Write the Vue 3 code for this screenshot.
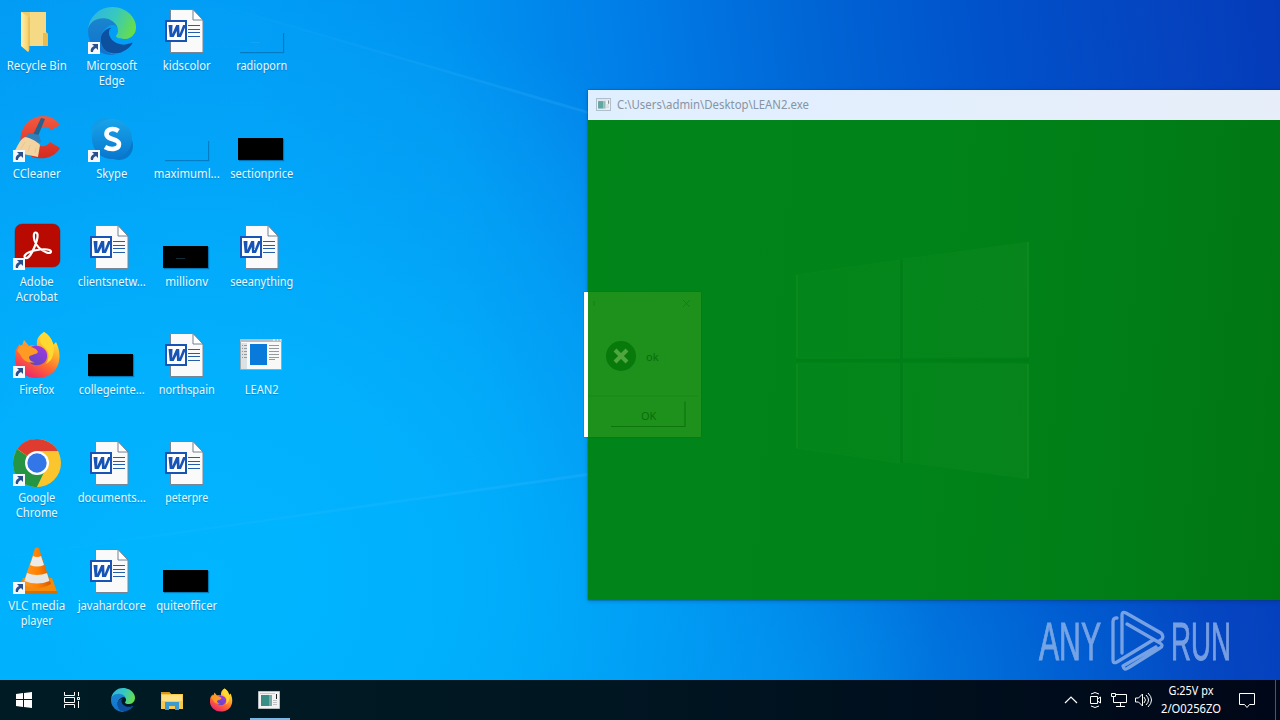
<script setup>
const columns = [
  [
    { icon: 'bin', shortcut: false, lines: [['Recycle Bin', 60]] },
    { icon: 'ccleaner', shortcut: true, lines: [['CCleaner', 48]] },
    { icon: 'acrobat', shortcut: true, lines: [['Adobe', 34], ['Acrobat', 42]] },
    { icon: 'firefox', shortcut: true, lines: [['Firefox', 35]] },
    { icon: 'chrome', shortcut: true, lines: [['Google', 37], ['Chrome', 42]] },
    { icon: 'vlc', shortcut: true, lines: [['VLC media', 57], ['player', 32]] }
  ],
  [
    { icon: 'edge', shortcut: true, lines: [['Microsoft', 51], ['Edge', 26]] },
    { icon: 'skype', shortcut: true, lines: [['Skype', 31]] },
    { icon: 'word', lines: [['clientsnetw...', 68]] },
    { icon: 'black', lines: [['collegeinte...', 66]] },
    { icon: 'word', lines: [['documents...', 68]] },
    { icon: 'word', lines: [['javahardcore', 68]] }
  ],
  [
    { icon: 'word', lines: [['kidscolor', 48]] },
    { icon: 'ghost', lines: [['maximuml...', 66]] },
    { icon: 'black', mark: true, lines: [['millionv', 43]] },
    { icon: 'word', lines: [['northspain', 56]] },
    { icon: 'word', lines: [['peterpre', 43]] },
    { icon: 'black', lines: [['quiteofficer', 61]] }
  ],
  [
    { icon: 'ghost', mark: true, lines: [['radioporn', 51]] },
    { icon: 'black', lines: [['sectionprice', 63]] },
    { icon: 'word', lines: [['seeanything', 63]] },
    { icon: 'app', lines: [['LEAN2', 34]] }
  ]
]
</script>

<template>
  <div class="screen">
    <svg class="defs" width="0" height="0" aria-hidden="true">
      <defs>
        <linearGradient id="edgeGreen" x1="0" y1=".3" x2="1" y2=".6">
          <stop offset="0" stop-color="#2fb4e4" /><stop offset=".5" stop-color="#36c8c0" /><stop offset="1" stop-color="#68de48" />
        </linearGradient>
        <linearGradient id="edgeBlue" x1=".5" y1="0" x2=".5" y2="1">
          <stop offset="0" stop-color="#1a86cf" /><stop offset="1" stop-color="#1172cc" />
        </linearGradient>
        <linearGradient id="ffBody" x1=".8" y1="0" x2=".25" y2="1">
          <stop offset="0" stop-color="#fff045" /><stop offset=".32" stop-color="#ffb52a" /><stop offset=".62" stop-color="#ff6a31" /><stop offset="1" stop-color="#ed1e72" />
        </linearGradient>
        <linearGradient id="ffCore" x1=".8" y1="0" x2=".2" y2="1">
          <stop offset="0" stop-color="#a338df" /><stop offset="1" stop-color="#5c48c2" />
        </linearGradient>
        <linearGradient id="skypeBg" x1="0" y1="0" x2="0" y2="1">
          <stop offset="0" stop-color="#18a4ea" /><stop offset="1" stop-color="#0877cf" />
        </linearGradient>
        <linearGradient id="ccRed" x1="0" y1="0" x2="0" y2="1">
          <stop offset="0" stop-color="#f45a40" /><stop offset="1" stop-color="#d52a20" />
        </linearGradient>
        <linearGradient id="folder" x1="0" y1="0" x2="1" y2="0">
          <stop offset="0" stop-color="#fff0b0" /><stop offset="1" stop-color="#f4ce62" />
        </linearGradient>
        <linearGradient id="cone" x1="0" y1="0" x2="1" y2="0">
          <stop offset="0" stop-color="#ff9a25" /><stop offset=".55" stop-color="#ff8000" /><stop offset="1" stop-color="#d75a00" />
        </linearGradient>

        <symbol id="i-bin" viewBox="0 0 48 48">
          <path d="M8 5h25v20l2 2v12H15z" fill="#f1cb67" />
          <path d="M17 5h16v34H17z" fill="#f6d984" />
          <path d="M30 26h3l2 1v12h-5z" fill="#e9bc4d" />
          <path d="M8 5l8 5v34l-1 1-7-6z" fill="url(#folder)" />
          <path d="M16 10v33" stroke="#dfb34b" stroke-width=".8" />
        </symbol>
        <symbol id="i-edge" viewBox="0 0 256 256">
          <path d="M231 190.500c-3.200 1.700-6.600 3.200-10.100 4.400a87.400 87.400 0 0 1-31.600 5.900c-41.700 0-78-28.700-78-65.500a27.500 27.500 0 0 1 14.400-24.100c-37.700 1.600-60 40.900-60 63.900 0 55 45 76 85.500 71.700 7 0 17.500-2 23.800-4l1.200-.4a128 128 0 0 0 60-46 4 4 0 0 0-5.200-5.900z" fill="#0c509f" />
          <path d="M105.700 241.400A79.200 79.200 0 0 1 83 220.100 80.700 80.700 0 0 1 115 100c3.100-1.500 8.500-4.100 15.600-4a32.400 32.400 0 0 1 25.700 13 31.900 31.900 0 0 1 6.300 18.700c0-.2 24.500-79.600-80-79.600C38 48 0 89.700 0 128a130 130 0 0 0 12.100 56 128 128 0 0 0 156.400 65.300 75.600 75.600 0 0 1-62.800-8z" fill="url(#edgeBlue)" />
          <path d="M152.300 148.900c-.8 1-3.300 2.500-3.300 5.600 0 2.600 1.700 5.100 4.700 7.200 14.400 10 41.500 8.700 41.600 8.700a59.600 59.600 0 0 0 30.300-8.300A61.400 61.400 0 0 0 256 109.200c.3-22.400-8-37.300-11.300-43.900C223.500 23.800 177.700 0 128 0A128 128 0 0 0 0 126.200C.5 89.700 36.800 60.200 80 60.200c3.500 0 23.500.3 42 10 16.300 8.600 24.900 19 30.900 29.200 6.100 10.700 7.200 24.200 7.200 29.600s-2.700 13.300-7.800 19.900z" fill="url(#edgeGreen)" />
        </symbol>
        <symbol id="i-word" viewBox="0 0 48 48">
          <path d="M9.500 3.500H31.500L42 14v32.500H9.500z" fill="#fafafa" stroke="#788595" />
          <path d="M32 3.500v10.500h10z" fill="#fff" stroke="#718094" />
          <path d="M27 19.500h12M27 23.500h12M27 26.500h12M27 30.500h12" stroke="#245eaa" />
          <path d="M5 15h20v20H5z" fill="#fff" stroke="#1854b5" stroke-width="2" />
          <path d="M7.500 19h4l-.3 9 4-9h3l.4 9 3.500-9h3L20 31h-4l-.3-6-3 6h-4z" fill="#1854b5" />
        </symbol>
        <symbol id="i-ccleaner" viewBox="0 0 48 48">
          <path d="M47 10C42 1 29-2 19 4 7 11 4 27 12 37c8 9 28 9 35-4l-10-6c-4 6-11 5-14 1-4-7 0-15 7-16 4-1 6 0 8 3z" fill="url(#ccRed)" />
          <path d="M28 3l4 1-9 22-5-2z" fill="#25638e" /><path d="M16 18l10 2 2 7-9 3-7-7z" fill="#347fba" />
          <path d="M12 22c6 1 13 5 15 8l-2 12-10-2-14-3C4 33 6 25 12 22z" fill="#f3d4a1" />
          <path d="M12 27L8 34m9-4l-2 7m8-4l-1 5" stroke="#e6c894" fill="none" />
        </symbol>
        <symbol id="i-skype" viewBox="0 0 48 48">
          <circle cx="17" cy="17" r="14" fill="#149be5" /><circle cx="31" cy="31" r="14" fill="#0878cc" />
          <circle cx="24" cy="24" r="20" fill="url(#skypeBg)" />
          <path d="M30.500 16c-5-3.500-12-2-12 3 0 6.500 12.500 4 12.500 10 0 6-9 6-14 3" fill="none" stroke="#fff" stroke-width="4.600" />
        </symbol>
        <symbol id="i-acrobat" viewBox="0 0 48 48">
          <rect x="2" y="1" width="45" height="43" rx="7" fill="#b90a02" stroke="#7e1914" stroke-opacity=".45" />
          <path d="M22.500 9.500c-2 0-2 4-1 8 2 6 7 10 12 12 4 1.500 6-1 3-2.500-4-1.500-14-.5-20 2-5 2-6 5-4 6 3 1 7-6 9-11 2-5 3.500-9 3-12 0-2-1-2.500-2-2.500z" fill="none" stroke="#fff" stroke-width="2.200" />
        </symbol>
        <symbol id="i-firefox" viewBox="0 0 48 48">
          <path d="M31 1c8 5 8 10 9 13l3-3c4 8 5 18 1 25-4 8-12 11-20 11C10 47 1 37 2 25c0-6 2-9 5-12l1 4 3-8 5 6c3-1 6 0 8 0-1-7 2-11 7-14z" fill="url(#ffBody)" />
          <path d="M15 18c5-5 14-4 18 2 3 6 0 13-7 14-7 1-12-3-12-9l10-3c-4-1-6-2-9-4z" fill="url(#ffCore)" />
          <path d="M4 20l4-6 10 2c3 1 6 2 7 5-2 3-7 2-9 5 0 3 3 5 6 5-6 2-12-1-15-8z" fill="#ff9a25" />
          <path d="M31 1c8 5 12 14 9 23-1 5-4 7-7 9 5-9 2-14-3-18-4-4-4-9 1-14z" fill="#ffd832" />
        </symbol>
        <symbol id="i-chrome" viewBox="0 0 48 48">
          <circle cx="24" cy="24" r="24" fill="#fbc52d" />
          <path d="M24 24L4.500 10C9 3 16 0 24 0c9 0 17 5 21 12z" fill="#df3c30" />
          <path d="M24 24l9 5-9 19C11 48 0 38 0 24c0-5 2-10 4-14z" fill="#259544" />
          <path d="M24 12h21c5 14-2 33-21 36l11-18z" fill="#fbc52d" />
          <circle cx="24" cy="24" r="12" fill="#fff" /><circle cx="24" cy="24" r="9.700" fill="#3376e7" />
        </symbol>
        <symbol id="i-vlc" viewBox="0 0 48 48">
          <path d="M10 31h29l5 14-1 2H6l-1-3z" fill="#f58b08" /><path d="M5 44h39v3H5z" fill="#d66f00" />
          <path d="M22 1.500q2-2 4 0l12 35.500q-14 8-28 0z" fill="url(#cone)" />
          <path d="M20 9q4 2 8 0l3 9q-7 3-14 0z" fill="#ecebe8" />
          <path d="M14 26q10 4 20 0l2.500 8q-12.500 5-25 0z" fill="#e6e6e2" />
        </symbol>
        <symbol id="i-app" viewBox="0 0 48 48">
          <path d="M3.500 9.500h41v30h-41z" fill="#f8f8f6" stroke="#a1a9ae" /><path d="M3 9h42v3H3z" fill="#b9bcc4" />
          <path d="M36 10h2m2 0h1m2 0h1" stroke="#fff" /><path d="M4 13h6v26H4z" fill="#dce1e4" />
          <path d="M5 15.500h5M5 18.500h5M5 21.500h5M5 24.500h5M5 27.500h5" stroke="#9499a1" stroke-dasharray="1 1 3 1" />
          <path d="M32 15.500h10M32 18.500h10M32 21.500h10M32 24.500h10M32 27.500h10M32 29.500h6" stroke="#9499a1" />
          <path d="M13 14h17v21H13z" fill="#087bda" />
        </symbol>
        <symbol id="i-console" viewBox="0 0 22 18">
          <path d="M.5.5h21v17H.5z" fill="#f4f3f1" stroke="#b7bdc1" /><path d="M3 4h8v11H3z" fill="#398e86" />
          <path d="M11 4h3v11h-3z" fill="#78aaa5" /><path d="M15 9.500h4m-4 2h4m-4 2h4" stroke="#bec2c4" /><path d="M18.500 3v5" stroke="#222" /><path d="M2 2.500h15" stroke="#c6cbd0" />
        </symbol>
      </defs>
    </svg>

    <main class="desktop">
      <svg class="rays" viewBox="0 0 1280 680" aria-hidden="true">
        <defs>
          <linearGradient id="ray" x1="0" x2="1"><stop offset="0" stop-color="#6cd0ff" stop-opacity="0" /><stop offset="1" stop-color="#4bbcff" stop-opacity=".2" /></linearGradient>
        </defs>
        <path d="M205 0L588 111v3L195 0z" fill="url(#ray)" />
        <path d="M195 0L588 114V475L0 557V0z" fill="#24adff" opacity=".05" />
        <path d="M0 557L588 473v3L0 559z" fill="url(#ray)" />
      </svg>

      <div class="icons">
        <div v-for="(column, c) in columns" :key="c" class="column">
          <div v-for="item in column" :key="item.lines[0][0]" class="shortcut-item">
            <div class="picture">
              <div v-if="item.icon === 'black' || item.icon === 'ghost'" class="thumb" :class="[item.icon, { mark: item.mark }]"></div>
              <svg v-else class="glyph" :class="item.icon"><use :href="'#i-' + item.icon" /></svg>
              <svg v-if="item.shortcut" class="arrow" viewBox="0 0 12 12">
                <path d="M0 0h12v12H0z" fill="#f6f7fa" /><path d="M4 2h6v6L8 6C6 7 5 8 5 10H3C2 7 4 5 6 4z" fill="#28508d" />
              </svg>
            </div>
            <svg class="label" width="75" :height="item.lines.length * 15">
              <text v-for="(line, n) in item.lines" :key="n" x="36.700" :y="12 + n * 15" text-anchor="middle" :textLength="line[1]" lengthAdjust="spacingAndGlyphs">{{ line[0] }}</text>
            </svg>
          </div>
        </div>
      </div>

      <section class="dialog">
        <div class="dialog-veil"></div>
        <svg class="dialog-art" viewBox="0 0 117 145">
          <path d="M10 9v5M99 8l7 7m0-7l-7 7" stroke="#08780d" stroke-opacity=".6" fill="none" />
          <circle cx="37" cy="64" r="15" fill="#08790b" />
          <path d="M31 58l12 12m0-12L31 70" stroke="#4fa63f" stroke-width="4" />
          <path d="M4 104h110" stroke="#168313" stroke-opacity=".6" /><path d="M27 134.500h74v-25" stroke="#077008" stroke-opacity=".8" stroke-width="1.200" fill="none" />
        </svg>
        <span class="message">ok</span><span class="ok">OK</span>
      </section>

      <section class="window">
        <header><svg class="title-icon"><use href="#i-console" /></svg><svg class="title" width="200" height="20"><text x="0" y="14" textLength="192" lengthAdjust="spacingAndGlyphs">C:\Users\admin\Desktop\LEAN2.exe</text></svg></header>
        <svg class="console" viewBox="0 0 692 480">
          <defs>
            <linearGradient id="pane"><stop offset="0" stop-color="#0e8a20" stop-opacity=".15" /><stop offset="1" stop-color="#0e8a20" stop-opacity=".45" /></linearGradient>
          </defs>
          <path d="M208.500 155L312 140v98H208.500zM315 139l125.500-17v115H315zM208.500 244H312v99l-103.500-15zM315 244h125.500v115L315 342z" fill="url(#pane)" stroke="#1f9429" stroke-opacity=".12" />
          <path d="M208 240.500h233M313.500 140v203" stroke="#007a17" stroke-opacity=".6" stroke-width="3" />
          <path d="M209 155v82m231-115v115m0 7v114M209 244v84" stroke="#219529" stroke-opacity=".3" stroke-width="2" />
        </svg>
      </section>

      <div class="watermark">
        <svg class="brand" width="72" height="50"><text x="0" y="34" textLength="62" lengthAdjust="spacingAndGlyphs">ANY</text></svg>
        <svg class="play" viewBox="0 0 54 62">
          <path d="M6 8H5q-3 0-3 4v38q0 4 4 2l36-22M11 43V5q0-4 4-2l35 20q3 3 1 6l-3 2M16 14l33 19q4 3 0 5L17 58q-4 3-5-2l33-19" fill="none" stroke="currentColor" stroke-width="3.300" stroke-linecap="round" stroke-linejoin="round" />
        </svg>
        <svg class="brand run" width="64" height="50"><text x="0" y="34" textLength="60" lengthAdjust="spacingAndGlyphs">RUN</text></svg>
      </div>
    </main>

    <footer class="taskbar">
      <div class="launchers">
        <div class="launch"><svg width="16" height="16" viewBox="0 0 16 16"><path d="M0 2l7-1v6H0zM8 1l8-1v7H8zM0 8h7v7l-7-1zM8 8h8v8l-8-1z" fill="#fff" /></svg></div>
        <div class="launch"><svg width="16" height="16" viewBox="0 0 16 16"><path d="M.5 0v3.500h10V0M.5 16v-3.500h10V16M.5 5.500h10v5H.5zM14.500 0v4m0 5v7M13.500 5.500h2v2h-2z" fill="none" stroke="#fff" /></svg></div>
        <div class="launch"><svg width="24" height="24"><use href="#i-edge" /></svg></div>
        <div class="launch"><svg width="22" height="19" viewBox="0 0 22 19"><path d="M0 1h8l2 2h12v15H0z" fill="#f8c94b" /><path d="M0 1h8l2 2H0z" fill="#d99718" /><path d="M1 4h20v6H1z" fill="#ffe083" /><path d="M4 19v-8h14v8h-4v-4H8v4z" fill="#3a9bd3" /></svg></div>
        <div class="launch"><svg width="24" height="24"><use href="#i-firefox" /></svg></div>
        <div class="launch active"><svg width="22" height="18"><use href="#i-console" /></svg></div>
      </div>
      <div class="tray">
        <svg class="status" viewBox="0 0 95 24" fill="none" stroke="#fff">
          <path d="M5 15l6-6 6 6" stroke-width="1.200" />
          <path d="M31 6q4-3 8 0M31 18q4 3 8 0M30.500 8.500h7v7h-7zM37.500 11l3-2v6l-3-2" />
          <path d="M55.500 6.500h11v8H53.500V11M60.500 14.500v4M56 18.500h9M51.500 5.500h4v3h-4zM53.500 8v4" />
          <path d="M75.500 10h3l4-4v12l-4-4h-3zM84 9q3 3 0 6M86 7q5 5 0 10M88 5q7 7 0 14" />
        </svg>
        <div class="clock">
          <svg width="70" height="40"><text x="32" y="15" text-anchor="middle" textLength="45" lengthAdjust="spacingAndGlyphs">G:25V px</text><text x="32" y="33" text-anchor="middle" textLength="60" lengthAdjust="spacingAndGlyphs">2/O0256ZO</text></svg>
        </div>
        <svg class="notice" viewBox="0 0 18 18"><path d="M1.500 2.500h15v11h-5l-2.500 3-2.500-3h-5z" fill="none" stroke="#fff" /></svg>
        <i class="peek"></i>
      </div>
    </footer>
  </div>
</template>

<style>
html, body { margin: 0; overflow: hidden; }
</style>

<style scoped>
.screen { width: 1280px; height: 720px; overflow: hidden; display: flex; flex-direction: column; font-family: "Noto Sans", "Open Sans", sans-serif; }
.defs { position: absolute; }
.desktop {
  position: relative; height: 680px; flex: none; overflow: hidden;
  background:
    radial-gradient(ellipse 740px 600px at 200px 580px, #00b6ff 0%, rgba(0,182,255,.8) 35%, rgba(0,170,255,0) 100%),
    radial-gradient(ellipse 420px 260px at 800px 680px, rgba(0,145,238,.6) 0%, rgba(0,140,235,0) 100%),
    linear-gradient(83deg, #009af4 0%, #009cf6 24%, #0094f1 38%, #007ce7 53%, #0066d6 65%, #0052cb 78%, #0544c0 91%, #043bb9 100%);
}
.rays { position: absolute; inset: 0; width: 1280px; height: 680px; }
.icons { position: relative; display: flex; width: 300px; }
.column { width: 75px; flex: none; display: flex; flex-direction: column; }
.shortcut-item { height: 108px; flex: none; }
.picture { position: relative; height: 58px; }
.glyph { position: absolute; left: 13px; top: 7px; width: 48px; height: 48px; }
.glyph.word { left: 11px; top: 6px; }
.glyph.app { top: 6px; left: 12px; }
.arrow { position: absolute; left: 13px; top: 42px; width: 12px; height: 12px; }
.thumb { position: absolute; left: 13px; top: 30px; width: 45px; height: 22px; box-shadow: 1px 1px 1px rgba(0,45,90,.4); }
.thumb.black { background: #000; }
.thumb.ghost { clip-path: inset(3px -3px -3px 2px); box-shadow: 1px 1px 1px rgba(0,65,120,.4); }
.thumb.mark::after { content: ""; position: absolute; left: 13px; top: 12px; width: 9px; height: 1px; background: #4cb4e6; opacity: .25; }
.label { display: block; overflow: visible; }
.label text { font-size: 12px; fill: #e8f8ff; text-shadow: 0 1px 1px rgba(0,65,110,.35); }
.dialog { position: absolute; left: 584px; top: 292px; width: 117px; height: 145px; background: #fff; z-index: 2; box-shadow: 0 0 1px #085b42; }
.dialog-veil { position: absolute; left: 4px; top: 0; width: 113px; height: 145px; background: #1d911b; }
.dialog-art { position: absolute; inset: 0; width: 117px; height: 145px; filter: blur(.5px); }
.message, .ok { position: absolute; color: #096e0c; font-size: 12px; line-height: 16px; }
.message { left: 62px; top: 57px; font-size: 11px; }
.ok { left: 57px; top: 116px; font-size: 11px; }
.window { position: absolute; left: 588px; top: 90px; width: 692px; height: 510px; box-shadow: 0 0 1px #003c45, 0 1px 4px rgba(0,25,80,.3); }
.window header { height: 30px; background: linear-gradient(90deg,#e0efff,#e7eef9); display: flex; align-items: center; }
.title-icon { width: 15px; height: 13px; margin: 0 6px 2px 8px; opacity: .75; outline: 1px solid #9fb0be; outline-offset: -1px; }
.title { overflow: visible; }
.title text { font-size: 12px; fill: #8794a4; }
.console { display: block; width: 692px; height: 480px; background: linear-gradient(95deg,#008519 0%,#008419 45%,#007d17 78%,#007612 100%); }
.watermark { position: absolute; left: 1039px; top: 610px; width: 200px; height: 62px; display: flex; color: #93b5ea; opacity: .8; }
.brand { width: 72px; margin-top: 16px; flex: none; overflow: visible; }
.brand text { font: 53px "Liberation Sans", Arial, sans-serif; fill: currentColor; stroke: currentColor; stroke-width: 1px; }
.play { width: 54px; height: 62px; flex: none; }
.run { width: 64px; margin-left: 6px; }
.taskbar { height: 40px; flex: none; display: flex; justify-content: space-between; background: linear-gradient(90deg,#001b24 0%,#001722 45%,#000718 100%); }
.launchers { display: flex; width: 294px; }
.launch { width: 49px; height: 40px; display: flex; align-items: center; justify-content: center; flex: none; box-sizing: border-box; }
.launch:first-child { padding-right: 1px; }
.launch:nth-child(2) { margin-left: -2px; }
.launch:nth-child(3) { margin-left: 2px; }
.launch.active { position: relative; padding-right: 1px; }
.launch.active::after { content: ""; position: absolute; left: 5px; bottom: 0; width: 40px; height: 2px; background: #76b9e9; }
.tray { display: flex; align-items: center; width: 220px; }
.status { width: 95px; height: 24px; flex: none; }
.clock { width: 70px; height: 40px; margin-left: 4px; flex: none; }
.clock svg { overflow: visible; display: block; }
.clock text { font-size: 12px; fill: #fff; }
.notice { width: 18px; height: 18px; margin-left: 9px; flex: none; }
.peek { width: 1px; height: 40px; margin-left: 19px; background: #4e5865; }
</style>
